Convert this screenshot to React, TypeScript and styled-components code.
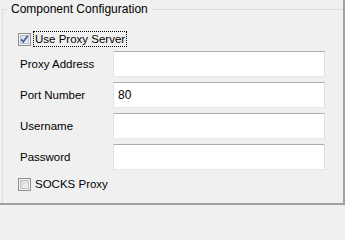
import React from "react";
import styled, { createGlobalStyle } from "styled-components";

const GlobalStyle = createGlobalStyle`
  html, body { margin: 0; padding: 0; background: #f0f0f0; }
  body { font-family: "Liberation Sans", Arial, sans-serif; color: #000; }
`;

const Window = styled.div`
  width: 345px;
  height: 205px;
  box-sizing: border-box;
  background: #f0f0f0;
  padding-left: 2px;
  border-right: 2px solid #a0a0a0;
  border-bottom: 2px solid #a0a0a0;
  overflow: hidden;
`;

const Group = styled.fieldset`
  margin: 0;
  padding: 0;
  min-width: 0;
  height: 100%;
  box-sizing: border-box;
  border: none;
  border-top: 1px solid #d5dfe5;
  border-left: 1px solid #d5dfe5;
`;

const Legend = styled.legend`
  margin-left: 4px;
  padding: 0 4px 0 4px;
  font-size: 12px;
  line-height: 18px;
  color: #000;
`;

const Body = styled.div`
  padding: 13px 0 0 15px;
  display: flex;
  flex-direction: column;
`;

const CheckRow = styled.label<{ $gapTop?: number }>`
  display: flex;
  align-items: center;
  gap: 2px;
  height: 16px;
  margin-top: ${(p) => p.$gapTop ?? 0}px;
  font-size: 11.5px;
`;

const CheckText = styled.span<{ $focused?: boolean }>`
  padding: 0 1px;
  line-height: 14px;
  border: 1px dotted ${(p) => (p.$focused ? "#000" : "transparent")};
`;

const Form = styled.div`
  display: grid;
  grid-template-columns: 93px 212px;
  grid-auto-rows: 26px;
  row-gap: 5px;
  margin-top: 4px;
  padding-left: 2px;
`;

const FieldLabel = styled.span`
  align-self: center;
  font-size: 11.5px;
  line-height: 14px;
`;

const TextBox = styled.input`
  box-sizing: border-box;
  width: 100%;
  height: 26px;
  margin: 0;
  padding: 0 4px;
  background: #fff;
  border: 1px solid;
  border-color: #abadb3 #dbdfe6 #e3e9ef #e2e3ea;
  border-radius: 0;
  font-family: "Liberation Sans", Arial, sans-serif;
  font-size: 12px;
  color: #000;
  outline: none;
`;

function CheckBox({ checked }: { checked: boolean }) {
  const id = checked ? "gc" : "gu";
  return (
    <svg width="13" height="13" viewBox="0 0 13 13">
      <defs>
        <linearGradient id={id} x1="0" y1="0" x2="1" y2="1">
          <stop offset="0" stopColor={checked ? "#cfd5e0" : "#d4d4d4"} />
          <stop offset="1" stopColor={checked ? "#f2f4f8" : "#f7f7f7"} />
        </linearGradient>
      </defs>
      <rect x="0.5" y="0.5" width="12" height="12" fill="#f4f4f4" stroke="#8e8f8f" />
      <rect x="2.5" y="2.5" width="8" height="8" fill={`url(#${id})`} stroke={checked ? "#b7bfcd" : "#c2c2c2"} />
      {checked && (
        <path d="M3.2 6.3 L5.3 8.8 L9.8 2.8" fill="none" stroke="#4d5f9a" strokeWidth="1.7" />
      )}
    </svg>
  );
}

export default function App() {
  return (
    <>
      <GlobalStyle />
      <Window>
        <Group>
          <Legend>Component Configuration</Legend>
          <Body>
            <CheckRow>
              <CheckBox checked />
              <CheckText $focused>Use Proxy Server</CheckText>
            </CheckRow>
            <Form>
              <FieldLabel>Proxy Address</FieldLabel>
              <TextBox defaultValue="" />
              <FieldLabel>Port Number</FieldLabel>
              <TextBox defaultValue="80" />
              <FieldLabel>Username</FieldLabel>
              <TextBox defaultValue="" />
              <FieldLabel>Password</FieldLabel>
              <TextBox type="password" defaultValue="" />
            </Form>
            <CheckRow $gapTop={6}>
              <CheckBox checked={false} />
              <CheckText>SOCKS Proxy</CheckText>
            </CheckRow>
          </Body>
        </Group>
      </Window>
    </>
  );
}
